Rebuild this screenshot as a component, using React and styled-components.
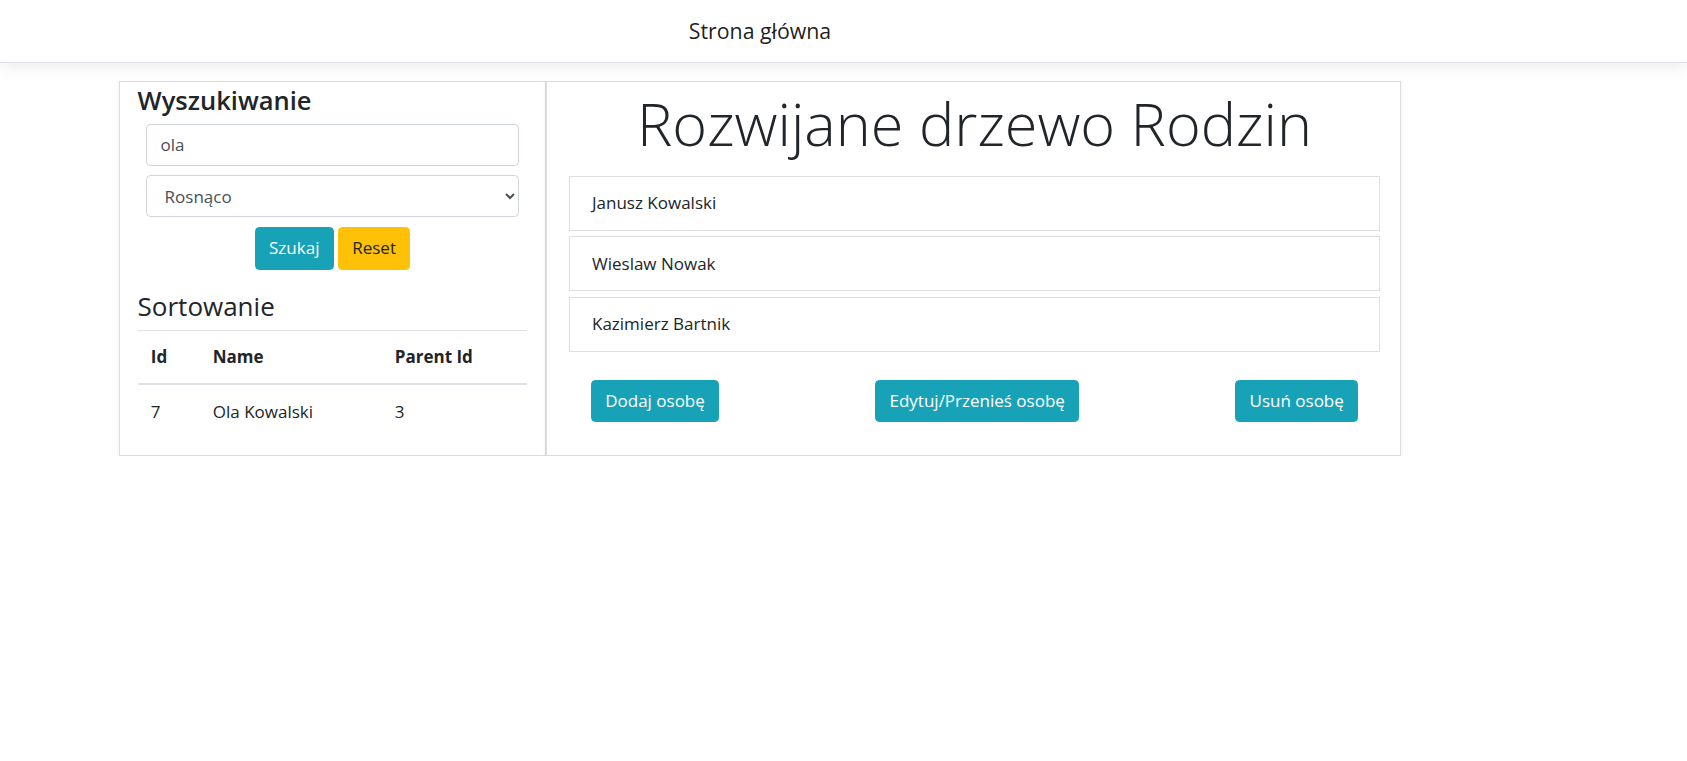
import React from 'react';
import styled, { createGlobalStyle } from 'styled-components';

const GlobalStyle = createGlobalStyle`
    * { box-sizing: border-box; }
    body {
        margin: 0;
        background: #ffffff;
        color: #212529;
        font-family: "Open Sans", "Noto Sans", sans-serif;
        font-size: 17px;
    }
`;

const people = ['Janusz Kowalski', 'Wieslaw Nowak', 'Kazimierz Bartnik'];
const rows = [{ id: 7, name: 'Ola Kowalski', parent: 3 }];

//Family tree page
export default function App(){
    return (<>
                <GlobalStyle />
                <NavBar>
                    <NavInner>
                        <Brand href="#">Strona główna</Brand>
                    </NavInner>
                </NavBar>

                <Main>
                    <SideCard>
                        <SectionTitle>Wyszukiwanie</SectionTitle>
                        <SearchForm>
                            <TextInput defaultValue="ola" />
                            <Select defaultValue="asc">
                                <option value="asc">Rosnąco</option>
                                <option value="desc">Malejąco</option>
                            </Select>
                            <ButtonRow>
                                <Button variant="info">Szukaj</Button>
                                <Button variant="warning">Reset</Button>
                            </ButtonRow>
                        </SearchForm>

                        <SortTitle>Sortowanie</SortTitle>
                        <Table>
                            <thead>
                                <tr>
                                    <Th w={62}>Id</Th>
                                    <Th w={182}>Name</Th>
                                    <Th>Parent Id</Th>
                                </tr>
                            </thead>
                            <tbody>
                                {rows.map(r => (
                                    <tr key={r.id}>
                                        <Td>{r.id}</Td>
                                        <Td>{r.name}</Td>
                                        <Td>{r.parent}</Td>
                                    </tr>
                                ))}
                            </tbody>
                        </Table>
                    </SideCard>

                    <TreeCard>
                        <Display>Rozwijane drzewo Rodzin</Display>
                        <PersonList>
                            {people.map(p => <PersonItem key={p}>{p}</PersonItem>)}
                        </PersonList>
                        <ActionRow>
                            <Button variant="info">Dodaj osobę</Button>
                            <Button variant="info">Edytuj/Przenieś osobę</Button>
                            <Button variant="info">Usuń osobę</Button>
                        </ActionRow>
                    </TreeCard>
                </Main>
            </>);
}

const NavBar = styled.nav`
    height: 63px;
    background: #ffffff;
    border-bottom: 1px solid #e2e2ea;
    box-shadow: 0 5px 16px rgba(0, 0, 0, 0.07);
`;

const NavInner = styled.div`
    width: 1282px;
    margin-left: 119px;
    height: 100%;
    display: flex;
    align-items: center;
    justify-content: center;
`;

const Brand = styled.a`
    font-size: 21.3px;
    line-height: 30px;
    color: rgba(0, 0, 0, 0.9);
    text-decoration: none;
`;

const Main = styled.main`
    display: flex;
    align-items: stretch;
    width: 1282px;
    margin: 18px 0 0 119px;
`;

const Card = styled.section`
    background: #ffffff;
    border: 1px solid #dcdcdc;
    box-shadow: 0 2px 5px rgba(0, 0, 0, 0.07);
`;

const SideCard = styled(Card)`
    width: 427px;
    padding: 2px 17.6px 0;
`;

const TreeCard = styled(Card)`
    width: 855px;
    padding: 4px 20px 0 22px;
`;

const SectionTitle = styled.h4`
    margin: 0 0 8px;
    font-size: 25.5px;
    line-height: 32px;
    font-weight: 600;
`;

const SortTitle = styled(SectionTitle)`
    margin-top: 20px;
    margin-bottom: 8px;
    font-size: 26px;
    font-weight: 500;
`;

const SearchForm = styled.form`
    padding: 0 8.8px;
    display: flex;
    flex-direction: column;
`;

const fieldStyles = `
    width: 100%;
    height: 41.8px;
    padding: 6.6px 13.2px;
    font-family: inherit;
    font-size: 17px;
    line-height: 26.4px;
    color: #495057;
    background: #ffffff;
    border: 1px solid #ced4da;
    border-radius: 4.4px;
    outline: none;
`;

const TextInput = styled.input`
    ${fieldStyles}
`;

const Select = styled.select`
    ${fieldStyles}
    margin-top: 9.5px;
`;

const ButtonRow = styled.div`
    display: flex;
    justify-content: center;
    gap: 4.4px;
    margin-top: 10px;
`;

const Button = styled.button`
    height: 42.5px;
    font-family: inherit;
    font-size: 17px;
    line-height: 26.4px;
    padding: 6.6px 13.2px;
    border-radius: 4.4px;
    cursor: pointer;
    border: 1px solid ${props => props.variant === 'warning' ? '#ffc107' : '#17a2b8'};
    background: ${props => props.variant === 'warning' ? '#ffc107' : '#17a2b8'};
    color: ${props => props.variant === 'warning' ? '#212529' : '#ffffff'};
`;

const Table = styled.table`
    width: 100%;
    border-collapse: collapse;
    margin-bottom: 16.6px;
    color: #212529;
`;

const Th = styled.th`
    width: ${props => props.w ? props.w + 'px' : 'auto'};
    padding: 13.2px;
    text-align: left;
    font-weight: 700;
    line-height: 26.4px;
    vertical-align: bottom;
    border-top: 1px solid #dee2e6;
    border-bottom: 2px solid #dee2e6;
`;

const Td = styled.td`
    padding: 13.2px;
    line-height: 26.4px;
    border-top: 1px solid #dee2e6;
`;

const Display = styled.h1`
    margin: 0 0 16px;
    text-align: center;
    font-size: 59.4px;
    line-height: 74px;
    font-weight: 300;
`;

const PersonList = styled.ul`
    list-style: none;
    margin: 0;
    padding: 0;
    display: flex;
    flex-direction: column;
    gap: 5.6px;
`;

const PersonItem = styled.li`
    padding: 13.2px 22px;
    line-height: 26.4px;
    border: 1px solid #dfdfdf;
`;

const ActionRow = styled.div`
    display: flex;
    justify-content: space-between;
    padding: 0 22px;
    margin-top: 28px;
`;
